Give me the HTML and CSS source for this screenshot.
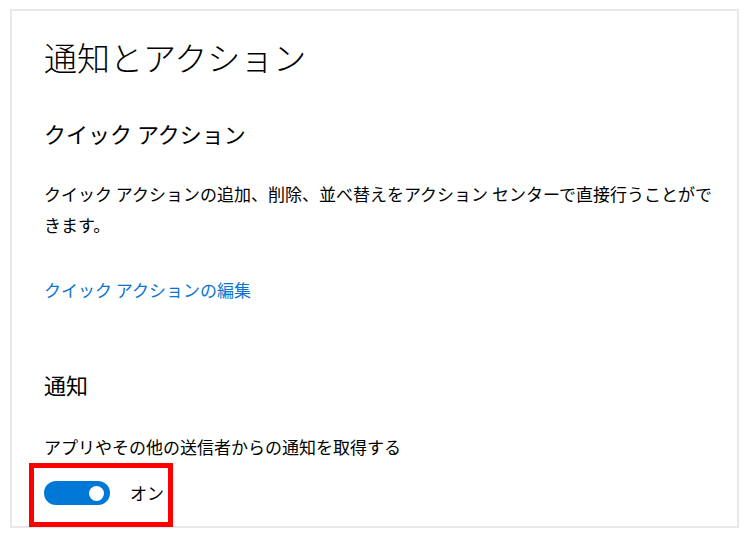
FILE: index.html
```html
<!DOCTYPE html>
<html lang="ja">
<head>
    <meta charset="UTF-8">
    <meta name="viewport" content="width=device-width, initial-scale=1.0">
    <title>通知とアクション</title>
    <link rel="stylesheet" href="styles.css">
</head>
<body>
    <div class="panel">
        <h1 class="page-title">通知とアクション</h1>

        <h2 class="section-title">クイック アクション</h2>
        <p class="text">クイック アクションの追加、削除、並べ替えをアクション センターで直接行うことができます。</p>
        <a class="link" href="#">クイック アクションの編集</a>

        <h2 class="section-title notify">通知</h2>
        <p class="text notify-text">アプリやその他の送信者からの通知を取得する</p>

        <div class="toggle-row">
            <span class="toggle"><span class="knob"></span></span>
            <span class="toggle-label">オン</span>
            <!-- red annotation box -->
            <div class="highlight"></div>
        </div>
    </div>
</body>
</html>
```

FILE: styles.css
```css
body {
    margin: 0;
    background: #ffffff;
    font-family: "Noto Sans CJK JP", sans-serif;
    color: #000000;
}

.panel {
    margin: 9px 0 0 10px;
    width: 729px;
    height: 519px;
    box-sizing: border-box;
    border: 2px solid #e8e8e8;
    padding: 24px 20px 0 32px;
}

.page-title {
    margin: 0;
    font-size: 33px;
    line-height: 44px;
    font-weight: 300;
}

.section-title {
    margin: 39px 0 0;
    font-size: 22px;
    line-height: 30px;
    font-weight: 400;
}

.section-title.notify {
    margin-top: 64px;
}

.text {
    margin: 30px 0 0;
    font-size: 17px;
    line-height: 31px;
}

.text.notify-text {
    margin-top: 32px;
}

.link {
    display: block;
    margin-top: 34px;
    font-size: 17px;
    line-height: 31px;
    color: #0a74d0;
    text-decoration: none;
}

.toggle-row {
    position: relative;
    display: flex;
    align-items: center;
    gap: 20px;
    margin-top: 19px;
    height: 24px;
}

.toggle {
    display: flex;
    align-items: center;
    justify-content: flex-end;
    width: 66px;
    height: 24px;
    padding-right: 6px;
    box-sizing: border-box;
    border-radius: 12px;
    background: #0078d7;
}

.knob {
    width: 15px;
    height: 15px;
    border-radius: 50%;
    background: #ffffff;
}

.toggle-label {
    font-size: 17px;
    line-height: 24px;
}

.highlight {
    position: absolute;
    left: -15px;
    top: -18px;
    width: 144px;
    height: 64px;
    box-sizing: border-box;
    border: 5px solid #ff0000;
}
```
